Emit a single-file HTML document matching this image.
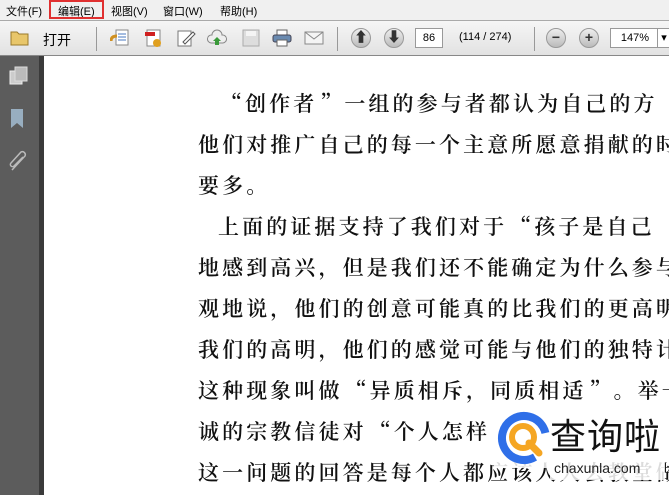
<!DOCTYPE html>
<html><head><meta charset="utf-8"><style>
body{margin:0;width:669px;height:495px;overflow:hidden;background:#fff;font-family:"Liberation Sans","Noto Sans CJK SC",sans-serif;position:relative}
#menu{position:absolute;top:0;left:0;width:669px;height:20px;background:#f0f0f0;font-size:11px;color:#000}
#menu span{position:absolute;top:3px}
#tb{position:absolute;top:20px;left:0;width:669px;height:36px;background:linear-gradient(#f6f6f6,#e2e2e2);border-top:1px solid #aaa;border-bottom:1px solid #888;box-sizing:border-box}
.ic{position:absolute;top:8px;width:20px;height:18px}
#side{position:absolute;top:56px;left:0;width:39px;height:439px;background:#5c5c5c}
#sb{position:absolute;top:56px;left:39px;width:5px;height:439px;background:#3a3a3a}
.t{position:absolute;font-family:"Noto Serif CJK SC",serif;font-weight:600;font-size:21px;color:#111;white-space:nowrap;letter-spacing:3.1px}
.q{display:inline-block;width:27px;text-align:center;letter-spacing:0}
.sep{position:absolute;top:6px;width:1px;height:24px;background:#999}
.box{position:absolute;top:7px;height:20px;background:#fff;border:1px solid #999;box-sizing:border-box;font-size:11px;line-height:18px;text-align:center}
.circ{position:absolute;top:7px;width:20px;height:20px;border-radius:50%;background:linear-gradient(#eee,#bbb);border:1px solid #999;box-sizing:border-box;color:#333;font-weight:bold;font-size:14px;line-height:17px;text-align:center}
</style></head><body>
<div id="menu">
<span style="left:6px">文件(F)</span>
<span style="left:58px">编辑(E)</span>
<span style="left:111px">视图(V)</span>
<span style="left:163px">窗口(W)</span>
<span style="left:220px">帮助(H)</span>
<div style="position:absolute;left:49px;top:0;width:55px;height:19px;border:2px solid #e03030;box-sizing:border-box"></div>
</div>
<div id="tb">
<svg class="ic" style="left:10px" viewBox="0 0 20 18"><path d="M1 3h6l2 2h9v11H1z" fill="#e8c66a" stroke="#9a7a2a"/></svg>
<span style="position:absolute;left:43px;top:9px;font-size:14px">打开</span>
<div class="sep" style="left:96px"></div>
<svg class="ic" style="left:110px" viewBox="0 0 20 18"><rect x="6" y="1" width="12" height="15" fill="#fff" stroke="#888"/><path d="M8 5h8M8 8h8M8 11h8" stroke="#4a7ac0"/><path d="M1 12q0-5 6-5" stroke="#d09020" stroke-width="3" fill="none"/></svg>
<svg class="ic" style="left:143px" viewBox="0 0 20 18"><rect x="4" y="1" width="13" height="16" fill="#fff" stroke="#888"/><rect x="2" y="3" width="10" height="4" fill="#d02020"/><circle cx="14" cy="14" r="4" fill="#e0a020"/></svg>
<svg class="ic" style="left:176px" viewBox="0 0 20 18"><rect x="2" y="2" width="13" height="15" fill="#fff" stroke="#777"/><path d="M7 13l10-10 2 2-10 10z" fill="#fff" stroke="#555"/></svg>
<svg class="ic" style="left:207px" viewBox="0 0 20 18"><path d="M4 14a4 4 0 0 1 1-8a5 5 0 0 1 10 0a4 4 0 0 1 1 8z" fill="#eee" stroke="#888"/><path d="M10 8l-4 4h2v4h4v-4h2z" fill="#3a9a3a"/></svg>
<svg class="ic" style="left:241px" viewBox="0 0 20 18"><rect x="2" y="1" width="16" height="16" fill="#ddd" stroke="#aaa"/><rect x="5" y="2" width="10" height="5" fill="#f4f4f4"/></svg>
<svg class="ic" style="left:272px" viewBox="0 0 20 18"><rect x="5" y="1" width="10" height="5" fill="#fff" stroke="#666"/><rect x="1" y="6" width="18" height="7" rx="2" fill="#6a8ab0" stroke="#445"/><rect x="5" y="11" width="10" height="6" fill="#fff" stroke="#666"/></svg>
<svg class="ic" style="left:304px" viewBox="0 0 20 18"><rect x="1" y="3" width="18" height="12" fill="#f4f4f4" stroke="#888"/><path d="M1 3l9 7 9-7" fill="none" stroke="#888"/></svg>
<div class="sep" style="left:337px"></div>
<div class="circ" style="left:351px">⬆</div>
<div class="circ" style="left:384px">⬇</div>
<div class="box" style="left:415px;width:28px">86</div>
<span style="position:absolute;left:459px;top:10px;font-size:11px">(114 / 274)</span>
<div class="sep" style="left:534px"></div>
<div class="circ" style="left:546px">−</div>
<div class="circ" style="left:579px">+</div>
<div class="box" style="left:610px;width:50px">147%</div>
<div class="box" style="left:657px;width:14px;border-left:1px solid #999">▾</div>
</div>
<div id="side">
<svg style="position:absolute;left:9px;top:10px" width="20" height="20" viewBox="0 0 20 20"><rect x="1" y="5" width="12" height="13" fill="#ccc" stroke="#eee"/><rect x="6" y="1" width="12" height="14" fill="#bbb" stroke="#ddd"/></svg>
<svg style="position:absolute;left:10px;top:52px" width="18" height="22" viewBox="0 0 18 22"><path d="M1 1h12v19l-6-5-6 5z" fill="#98aec0"/></svg>
<svg style="position:absolute;left:8px;top:94px" width="22" height="24" viewBox="0 0 22 24"><path d="M4 20l13-14a3 3 0 0 0-4-4L3 13a2 2 0 0 0 3 3l9-9" fill="none" stroke="#bbb" stroke-width="1.5"/></svg>
</div>
<div id="sb"></div>
<div class="t" style="left:218px;top:88px"><span class="q">“</span>创作者<span class="q">”</span>一组的参与者都认为自己的方</div>
<div class="t" style="left:198px;top:129px">他们对推广自己的每一个主意所愿意捐献的时</div>
<div class="t" style="left:198px;top:170px">要多。</div>
<div class="t" style="left:218px;top:211px">上面的证据支持了我们对于<span class="q">“</span>孩子是自己</div>
<div class="t" style="left:198px;top:252px">地感到高兴，但是我们还不能确定为什么参与</div>
<div class="t" style="left:198px;top:293px">观地说，他们的创意可能真的比我们的更高明</div>
<div class="t" style="left:198px;top:334px">我们的高明，他们的感觉可能与他们的独特计</div>
<div class="t" style="left:198px;top:375px">这种现象叫做<span class="q">“</span>异质相斥，同质相适<span class="q">”</span>。举一个</div>
<div class="t" style="left:198px;top:416px">诚的宗教信徒对<span class="q">“</span>个人怎样</div>
<div class="t" style="left:198px;top:457px">这一问题的回答是每个人都应该人人去教堂做</div>
<div style="position:absolute;left:494px;top:408px;width:56px;height:60px;background:rgba(255,255,255,.85)"></div>
<svg style="position:absolute;left:496px;top:410px" width="56" height="56" viewBox="0 0 56 56"><circle cx="28" cy="28" r="22" fill="none" stroke="#2f6fe8" stroke-width="8" stroke-dasharray="110 40" transform="rotate(60 28 28)"/><circle cx="27" cy="27" r="11" fill="none" stroke="#f5a623" stroke-width="6"/><path d="M33 33l10 10" stroke="#f5a623" stroke-width="7" stroke-linecap="round"/></svg>
<div style="position:absolute;left:550px;top:410px;width:115px;height:70px;background:rgba(255,255,255,.85)"></div>
<div style="position:absolute;left:550px;top:412px;font-size:36px;line-height:44px;white-space:nowrap;font-family:'Noto Sans CJK SC',sans-serif;color:#111;letter-spacing:1px">查询啦</div>
<div style="position:absolute;left:554px;top:460px;font-size:14px;color:#222;white-space:nowrap">chaxunla.com</div>
</body></html>
